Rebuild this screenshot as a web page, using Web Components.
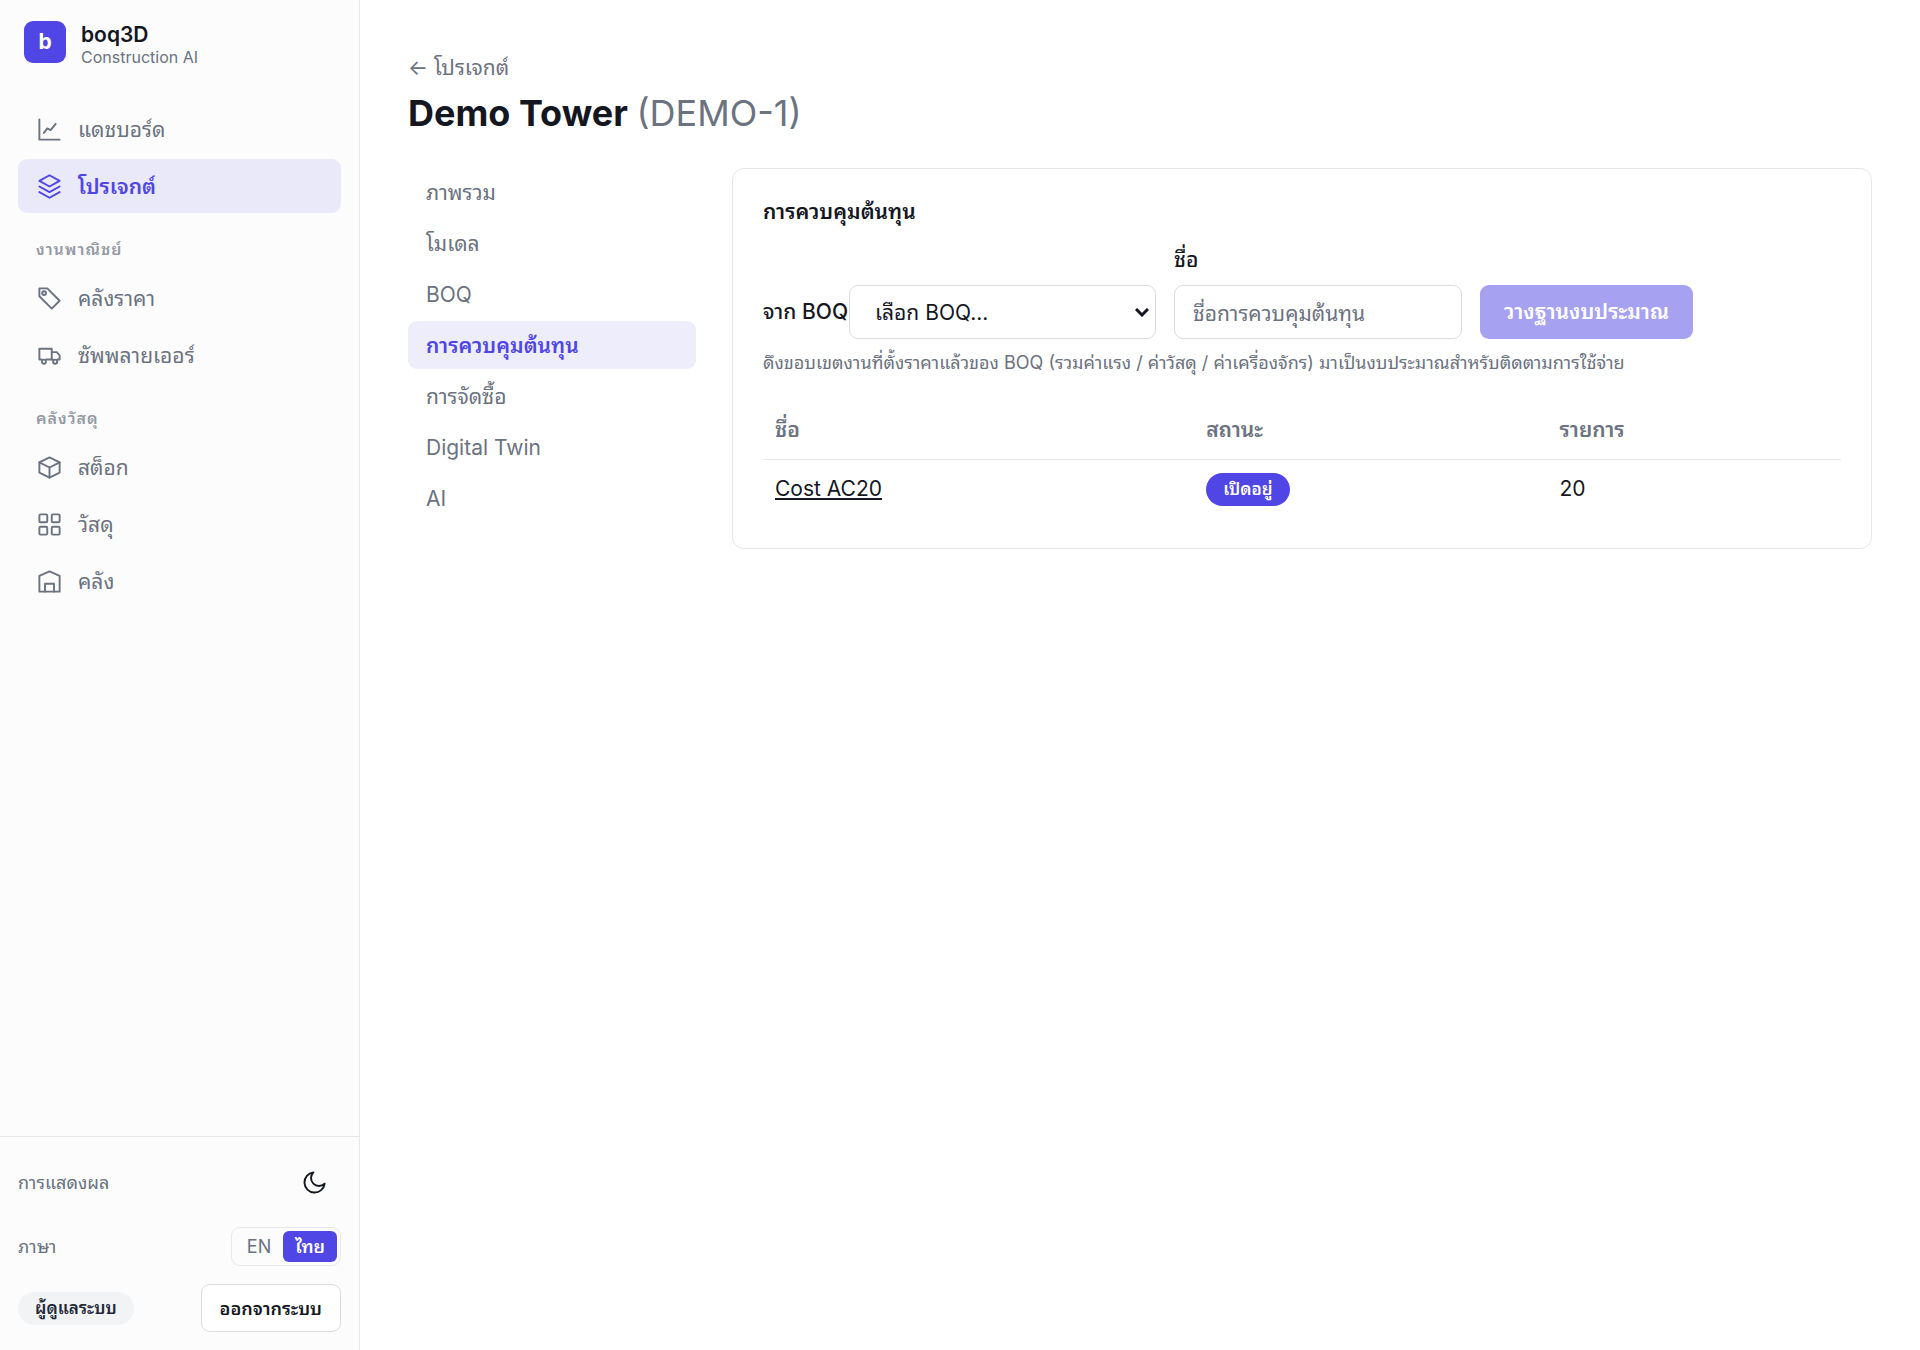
<!DOCTYPE html>
<html lang="th">
<head>
  <meta charset="utf-8">
  <meta name="viewport" content="width=device-width, initial-scale=1">
  <title>boq3D</title>
  <style>
    :root {
      --primary: #4f46e5;
      --primary-soft: #ededfb;
      --nav-active: #eae9f9;
      --text: #14171f;
      --muted: #6b7280;
      --faint: #9499a3;
      --border: #e5e7eb;
      --sidebar: #fcfcfd;
      --radius: 9px;
    }
    body {
      margin: 0;
      background: #fff;
      color: var(--text);
      font-family: Inter, "Noto Sans Thai Looped", Loma, "Noto Sans Thai", "Noto Sans", sans-serif;
      font-size: 21px;
      line-height: 32px;
    }
  </style>
</head>
<body>
  <app-shell>
    <app-sidebar slot="sidebar"></app-sidebar>
    <project-page></project-page>
  </app-shell>

  <script>
    const icons = {
      chart: '<path d="M3 3v18h18"/><path d="M7 15l3-4 3 1.500L17.500 7"/>',
      layers: '<path d="M12 2l9 5-9 5-9-5z"/><path d="M3 12l9 5 9-5"/><path d="M3 17l9 5 9-5"/>',
      tag: '<path d="M3 3h7l11 11-7 7L3 10z"/><circle cx="7.200" cy="7.200" r="1.700"/>',
      truck: '<path d="M5 15.500H3V6h11v9.500H9"/><path d="M14 9h4.500L21 12v3.500h-2M14 15.500h1"/><circle cx="7" cy="17.500" r="1.800"/><circle cx="17" cy="17.500" r="1.800"/>',
      box: '<path d="M12 3l9 4.500v9L12 21l-9-4.500v-9z"/><path d="M3 7.500l9 4.500 9-4.500M12 12v9"/>',
      grid: '<rect x="3" y="3" width="7" height="7" rx="1"/><rect x="14" y="3" width="7" height="7" rx="1"/><rect x="3" y="14" width="7" height="7" rx="1"/><rect x="14" y="14" width="7" height="7" rx="1"/>',
      store: '<path d="M3 21V7l9-4 9 4v14z"/><path d="M8 21v-7h8v7"/>',
      moon: '<path d="M21 13A9 9 0 1 1 11 3a7 7 0 0 0 10 10z"/>'
    }

    class AppShell extends HTMLElement {
      constructor () {
        super()
        this.attachShadow({ mode: 'open' })
      }

      connectedCallback () {
        this.shadowRoot.innerHTML =
          /* html */`
            <style>
              :host {
                display: grid;
                grid-template-columns: 360px 1fr;
                min-height: 100vh;
              }
              main {
                padding: 48px;
                min-width: 0;
              }
            </style>
            <slot name="sidebar"></slot>
            <main><slot></slot></main>
          `
      }
    }

    class AppIcon extends HTMLElement {
      constructor () {
        super()
        this.attachShadow({ mode: 'open' })
      }

      connectedCallback () {
        this.shadowRoot.innerHTML =
          /* html */`
            <style>
              :host {
                display: block;
                flex: none;
                width: 27px;
                height: 27px;
              }
              svg {
                display: block;
                fill: none;
                stroke: currentColor;
                stroke-width: 1.7;
                stroke-linecap: round;
                stroke-linejoin: round;
              }
            </style>
            <svg viewBox="0 0 24 24" width="100%" height="100%" aria-hidden="true">${icons[this.getAttribute('name')]}</svg>
          `
      }
    }

    class NavLink extends HTMLElement {
      constructor () {
        super()
        this.attachShadow({ mode: 'open' })
      }

      connectedCallback () {
        const icon = this.getAttribute('icon')
        this.shadowRoot.innerHTML =
          /* html */`
            <style>
              :host { display: block; }
              a {
                display: flex;
                align-items: center;
                gap: 15px;
                height: 54px;
                padding: 0 18px;
                border-radius: var(--radius);
                color: var(--muted);
                text-decoration: none;
              }
              span { padding-top: 2px; }
              :host([active]) a {
                background: var(--nav-active);
                color: var(--primary);
                font-weight: 600;
              }
              :host([compact]) a { height: 48px; }
              :host([compact][active]) a { background: var(--primary-soft); }
            </style>
            <a href="#">${icon ? `<app-icon name="${icon}"></app-icon>` : ''}<span><slot></slot></span></a>
          `
      }
    }

    class AppSidebar extends HTMLElement {
      constructor () {
        super()
        this.attachShadow({ mode: 'open' })
      }

      connectedCallback () {
        this.shadowRoot.innerHTML =
          /* html */`
            <style>
              :host {
                display: flex;
                flex-direction: column;
                justify-content: space-between;
                background: var(--sidebar);
                border-right: 1px solid var(--border);
              }
              .brand {
                display: flex;
                align-items: flex-start;
                gap: 15px;
                padding: 21px 24px 18px;
              }
              .logo {
                display: grid;
                place-items: center;
                width: 42px;
                height: 42px;
                border-radius: var(--radius);
                background: var(--primary);
                color: #fff;
                font-weight: 700;
              }
              .name {
                font-weight: 600;
                line-height: 27px;
              }
              .tagline {
                color: var(--muted);
                font-size: 16px;
                line-height: 18px;
              }
              nav {
                display: flex;
                flex-direction: column;
                gap: 3px;
                padding: 18px;
              }
              h2 {
                margin: 0;
                padding: 19px 18px 5px;
                color: var(--faint);
                font-size: 16px;
                font-weight: 600;
                letter-spacing: 1px;
                line-height: 28px;
              }
              footer {
                display: flex;
                flex-direction: column;
                gap: 18px;
                padding: 18px;
                border-top: 1px solid var(--border);
                font-size: 18px;
                line-height: 27px;
              }
              .row {
                display: flex;
                align-items: center;
                justify-content: space-between;
                color: var(--muted);
              }
              button {
                padding: 0;
                border: 0;
                background: none;
                color: inherit;
                font: inherit;
              }
              .theme {
                display: grid;
                place-items: center;
                width: 54px;
                height: 54px;
                color: var(--text);
              }
              .lang {
                display: flex;
                padding: 3px;
                border: 1px solid var(--border);
                border-radius: var(--radius);
              }
              .lang button {
                height: 31px;
                padding: 0 12px;
                border-radius: 6px;
              }
              .lang [aria-pressed="true"] {
                background: var(--primary);
                color: #fff;
                font-weight: 600;
              }
              .role {
                padding: 3px 17px;
                border-radius: 17px;
                background: #f1f3f5;
                color: #232838;
                font-size: 17px;
                font-weight: 600;
              }
              .logout {
                height: 48px;
                padding: 0 18px;
                border: 1px solid #d9dce1;
                border-radius: var(--radius);
                background: #fff;
                color: var(--text);
                font-weight: 600;
              }
            </style>
            <div>
              <div class="brand">
                <div class="logo">b</div>
                <div>
                  <div class="name">boq3D</div>
                  <div class="tagline">Construction AI</div>
                </div>
              </div>
              <nav>
                <nav-link icon="chart">แดชบอร์ด</nav-link>
                <nav-link icon="layers" active>โปรเจกต์</nav-link>
                <h2>งานพาณิชย์</h2>
                <nav-link icon="tag">คลังราคา</nav-link>
                <nav-link icon="truck">ซัพพลายเออร์</nav-link>
                <h2>คลังวัสดุ</h2>
                <nav-link icon="box">สต็อก</nav-link>
                <nav-link icon="grid">วัสดุ</nav-link>
                <nav-link icon="store">คลัง</nav-link>
              </nav>
            </div>
            <footer>
              <div class="row">
                <span>การแสดงผล</span>
                <button class="theme" type="button" aria-label="การแสดงผล"><app-icon name="moon"></app-icon></button>
              </div>
              <div class="row">
                <span>ภาษา</span>
                <div class="lang">
                  <button type="button" aria-pressed="false">EN</button>
                  <button type="button" aria-pressed="true">ไทย</button>
                </div>
              </div>
              <div class="row">
                <span class="role">ผู้ดูแลระบบ</span>
                <button class="logout" type="button">ออกจากระบบ</button>
              </div>
            </footer>
          `
      }
    }

    class ProjectPage extends HTMLElement {
      constructor () {
        super()
        this.attachShadow({ mode: 'open' })
      }

      connectedCallback () {
        this.shadowRoot.innerHTML =
          /* html */`
            <style>
              :host { display: block; }
              .back {
                display: block;
                padding-top: 4px;
                color: var(--muted);
                text-decoration: none;
              }
              h1 {
                margin: 0 0 28px;
                padding-top: 2px;
                font-size: 36px;
                font-weight: 700;
                line-height: 54px;
              }
              h1 span {
                color: var(--muted);
                font-weight: 400;
              }
              .layout {
                display: grid;
                grid-template-columns: 288px 1fr;
                align-items: start;
                gap: 36px;
              }
              nav {
                display: flex;
                flex-direction: column;
                gap: 3px;
              }
            </style>
            <a class="back" href="#">← โปรเจกต์</a>
            <h1>Demo Tower <span>(DEMO-1)</span></h1>
            <div class="layout">
              <nav>
                <nav-link compact>ภาพรวม</nav-link>
                <nav-link compact>โมเดล</nav-link>
                <nav-link compact>BOQ</nav-link>
                <nav-link compact active>การควบคุมต้นทุน</nav-link>
                <nav-link compact>การจัดซื้อ</nav-link>
                <nav-link compact>Digital Twin</nav-link>
                <nav-link compact>AI</nav-link>
              </nav>
              <cost-card></cost-card>
            </div>
          `
      }
    }

    class CostCard extends HTMLElement {
      constructor () {
        super()
        this.attachShadow({ mode: 'open' })
      }

      connectedCallback () {
        this.shadowRoot.innerHTML =
          /* html */`
            <style>
              :host {
                display: block;
                padding: 27px 30px 30px;
                border: 1px solid var(--border);
                border-radius: 12px;
              }
              h2 {
                margin: 0 0 16px;
                font-size: 21px;
                font-weight: 600;
              }
              form {
                display: flex;
                align-items: flex-end;
                gap: 18px;
              }
              label { font-weight: 500; }
              .inline {
                display: flex;
                align-items: center;
              }
              .inline label { min-width: 86px; }
              .stack {
                display: flex;
                flex-direction: column;
                gap: 9px;
              }
              input,
              select,
              button {
                box-sizing: border-box;
                height: 54px;
                border: 1px solid #d9dce1;
                border-radius: var(--radius);
                background: #fff;
                color: var(--text);
                font: inherit;
              }
              select {
                appearance: none;
                width: 307px;
                padding: 2px 24px 0 25px;
                background: #fff url('data:image/svg+xml,<svg xmlns="http://www.w3.org/2000/svg" width="14" height="9" fill="none" stroke="%2314171f" stroke-width="3"><path d="M1 1l6 6 6-6"/></svg>') no-repeat right 6px center;
              }
              input {
                width: 288px;
                padding: 2px 18px 0;
              }
              input::placeholder {
                color: var(--muted);
                opacity: 1;
              }
              button {
                padding: 0 24px;
                border: 0;
                background: var(--primary);
                color: #fff;
                font-weight: 600;
                opacity: 0.5;
              }
              p {
                margin: 10px 0 24px;
                color: var(--muted);
                font-size: 18px;
                line-height: 27px;
              }
              table {
                width: 100%;
                border-collapse: collapse;
              }
              th,
              td {
                height: 58px;
                padding: 0 12px;
                text-align: left;
              }
              th {
                height: 59px;
                border-bottom: 1px solid var(--border);
                color: var(--muted);
                font-weight: 600;
              }
              td a { color: inherit; }
              .badge {
                display: inline-block;
                padding: 3px 17px;
                border-radius: 17px;
                background: var(--primary);
                color: #fff;
                font-size: 17px;
                font-weight: 600;
                line-height: 27px;
              }
            </style>
            <h2>การควบคุมต้นทุน</h2>
            <form>
              <div class="inline">
                <label for="boq">จาก BOQ</label>
                <select id="boq"><option>เลือก BOQ...</option></select>
              </div>
              <div class="stack">
                <label for="name">ชื่อ</label>
                <input id="name" type="text" placeholder="ชื่อการควบคุมต้นทุน">
              </div>
              <button type="submit" disabled>วางฐานงบประมาณ</button>
            </form>
            <p>ดึงขอบเขตงานที่ตั้งราคาแล้วของ BOQ (รวมค่าแรง / ค่าวัสดุ / ค่าเครื่องจักร) มาเป็นงบประมาณสำหรับติดตามการใช้จ่าย</p>
            <table>
              <thead>
                <tr><th>ชื่อ</th><th>สถานะ</th><th>รายการ</th></tr>
              </thead>
              <tbody>
                <tr>
                  <td><a href="#">Cost AC20</a></td>
                  <td><span class="badge">เปิดอยู่</span></td>
                  <td>20</td>
                </tr>
              </tbody>
            </table>
          `
      }
    }

    customElements.define('app-icon', AppIcon)
    customElements.define('nav-link', NavLink)
    customElements.define('app-shell', AppShell)
    customElements.define('app-sidebar', AppSidebar)
    customElements.define('cost-card', CostCard)
    customElements.define('project-page', ProjectPage)
  </script>
</body>
</html>
